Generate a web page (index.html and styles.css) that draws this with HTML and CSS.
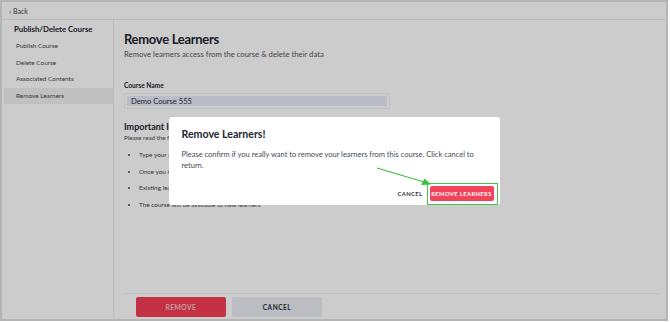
FILE: index.html
```html
<!DOCTYPE html>
<html lang="en">
<head>
  <meta charset="UTF-8" />
  <meta name="viewport" content="width=device-width, initial-scale=1.0"/>
  <title>Remove Learners</title>
  <link rel="stylesheet" href="styles.css">
</head>
<body>
  <div id="frame">
    <div id="topbar"><span class="chev">‹</span> Back</div>

    <div id="layout">
      <div id="sidebar">
        <div class="side-title">Publish/Delete Course</div>
        <div class="side-item">Publish Course</div>
        <div class="side-item">Delete Course</div>
        <div class="side-item">Associated Contents</div>
        <div class="side-item active">Remove Learners</div>
      </div>

      <div id="main">
        <div class="content">
          <h1>Remove Learners</h1>
          <p class="sub">Remove learners access from the course &amp; delete their data</p>

          <div class="label">Course Name</div>
          <div class="field"><div class="field-inner">Demo Course 555</div></div>

          <h2>Important Information</h2>
          <p class="note">Please read the following before removing learners</p>
          <ul>
            <li>Type your course name to confirm the removal</li>
            <li>Once you remove learners, their progress is deleted</li>
            <li>Existing learners will lose access to the course</li>
            <li>The course will be available to new learners</li>
          </ul>
        </div>

        <div class="footer">
          <button class="btn btn-remove">REMOVE</button>
          <button class="btn btn-cancel">CANCEL</button>
        </div>
      </div>
    </div>

    <div id="overlay">
      <div class="modal">
        <div class="modal-title">Remove Learners!</div>
        <p class="modal-text">Please confirm if you really want to remove your learners from this course. Click cancel to return.</p>
        <div class="modal-actions">
          <button class="link-cancel">CANCEL</button>
          <span class="highlight">
            <button class="btn-confirm">REMOVE LEARNERS</button>
          </span>
        </div>
        <svg class="arrow" width="56" height="20" viewBox="0 0 56 20">
          <line x1="1" y1="1" x2="48" y2="15" stroke="#3cc23c" stroke-width="1.2"/>
          <polygon points="55,17.5 45,18 48.5,11.5" fill="#3cc23c"/>
        </svg>
      </div>
    </div>
  </div>
</body>
</html>
```

FILE: styles.css
```css
body { margin: 0; padding: 0; font-family: Lato, "Liberation Sans", sans-serif; color: #1f2430; }

#frame {
  position: relative; width: 668px; height: 321px; box-sizing: border-box;
  border: 2px solid #b4b4b4; background: #fff; overflow: hidden;
  display: flex; flex-direction: column;
}

#topbar {
  height: 18px; box-sizing: border-box; padding: 5px 0 0 7px;
  font-size: 7px; color: #444; border-bottom: 1px solid #ececec;
}
#topbar .chev { font-size: 8px; line-height: 6px; }

#layout { flex: 1; display: flex; }

#sidebar {
  width: 112px; box-sizing: border-box; padding: 3px 0 0 2px;
  border-right: 1px solid #ebebeb; background: #fff;
}
.side-title { font-size: 7.8px; font-weight: 700; padding: 0 0 3px 10px; height: 12px; line-height: 12px; }
.side-item { font-size: 6.4px; color: #444; height: 16.5px; line-height: 16.5px; padding-left: 12px; }
.side-item.active { background: #f1f1f1; }

#main { flex: 1; display: flex; flex-direction: column; padding: 0 6px 0 10px; }
.content { flex: 1; }

h1 { margin: 10px 0 0; font-size: 13px; font-weight: 700; line-height: 18px; letter-spacing: -0.3px; }
.sub { margin: 1px 0 0; font-size: 7.7px; color: #555; }

.label { margin-top: 22px; font-size: 6.6px; font-weight: 700; }
.field {
  margin-top: 4px; width: 266px; box-sizing: border-box; padding: 2px;
  border: 1px solid #f1f1f1; border-radius: 2px;
}
.field-inner { background: #e6ebf6; height: 10px; line-height: 10px; font-size: 7.6px; padding-left: 4px; border-radius: 1px; color: #2a2f3a; }

h2 { margin: 12px 0 0; font-size: 9px; font-weight: 700; }
.note { margin: 2px 0 0; font-size: 6.2px; color: #444; }

ul { margin: 8px 0 0; padding-left: 15px; font-size: 6.4px; color: #444; }
li { height: 16.5px; line-height: 12px; }

.footer {
  border-top: 1px solid #f0f0f0; height: 26px; box-sizing: border-box;
  padding: 3px 0 0 12px; display: flex; gap: 6px;
}
.btn {
  width: 90px; height: 20px; border: none; border-radius: 2px;
  font-family: inherit; font-size: 6.6px; font-weight: 700; letter-spacing: 0.5px;
}
.btn-remove { background: #f53e55; color: #f8c4ca; }
.btn-cancel { background: #eaedf4; color: #2b2f38; }

#overlay {
  position: absolute; inset: 0; background: rgba(0, 0, 0, 0.2);
  display: flex; align-items: center; justify-content: center;
}

.modal {
  position: relative; width: 331px; height: 88px; box-sizing: border-box;
  background: #fff; border-radius: 3px; padding: 10px 13px 0;
  display: flex; flex-direction: column;
}
.modal-title { font-size: 10.6px; font-weight: 700; color: #222733; margin-top: 1px; }
.modal-text { margin: 9px 0 0; font-size: 7.5px; line-height: 11px; color: #444a56; }

.modal-actions { margin-top: auto; display: flex; justify-content: flex-end; align-items: center; gap: 4px; margin-right: -12px; }
.link-cancel { border: none; background: none; font-family: inherit; font-size: 5.8px; font-weight: 700; letter-spacing: 0.4px; color: #333; padding: 0; }
.highlight { display: inline-flex; border: 1.5px solid #46c346; padding: 2px 3px 3px 2px; margin-right: 1px; }
.btn-confirm {
  border: none; background: #f3435a; color: #fff; border-radius: 2px;
  font-family: inherit; font-size: 5.8px; font-weight: 700; letter-spacing: 0.4px;
  width: 64px; height: 15px; padding: 0;
}

.arrow { position: absolute; left: 207px; top: 50px; }
```
